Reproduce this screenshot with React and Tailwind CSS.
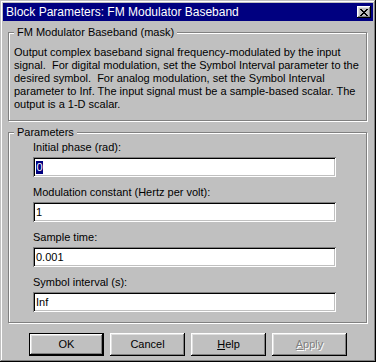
const description = [
  'Output complex baseband signal frequency-modulated by the input',
  'signal.  For digital modulation, set the Symbol Interval parameter to the',
  'desired symbol.  For analog modulation, set the Symbol Interval',
  'parameter to Inf. The input signal must be a sample-based scalar. The',
  'output is a 1-D scalar.',
]

const fields = [
  { label: 'Initial phase (rad):', value: '0', selected: true },
  { label: 'Modulation constant (Hertz per volt):', value: '1' },
  { label: 'Sample time:', value: '0.001' },
  { label: 'Symbol interval (s):', value: 'Inf' },
]

function CloseGlyph() {
  // 8x7 pixel cross, like the classic caption button
  const px = [
    [0, 0], [1, 0], [6, 0], [7, 0],
    [1, 1], [2, 1], [5, 1], [6, 1],
    [2, 2], [3, 2], [4, 2], [5, 2],
    [3, 3], [4, 3],
    [2, 4], [3, 4], [4, 4], [5, 4],
    [1, 5], [2, 5], [5, 5], [6, 5],
    [0, 6], [1, 6], [6, 6], [7, 6],
  ]
  return (
    <svg width="8" height="7" viewBox="0 0 8 7" shapeRendering="crispEdges">
      {px.map(([x, y]) => (
        <rect key={`${x}-${y}`} x={x} y={y} width="1" height="1" fill="#000" />
      ))}
    </svg>
  )
}

function Button({ children, isDefault, disabled }) {
  return (
    <button
      className={`w-[75px] h-[23px] flex items-center justify-center text-[11px] leading-[13px] bg-[#c0c0c0] shadow-[inset_-1px_-1px_#000,inset_1px_1px_#fff,inset_-2px_-2px_#808080,inset_2px_2px_#dfdfdf] ${
        isDefault ? 'border border-black' : ''
      } ${disabled ? 'text-[#808080] [text-shadow:1px_1px_0_#fff]' : 'text-black'}`}
    >
      {children}
    </button>
  )
}

export default function App() {
  return (
    <div className="w-[376px] h-[362px] bg-[#c0c0c0] p-[3px] flex flex-col shadow-[inset_-1px_-1px_#000,inset_1px_1px_#c0c0c0,inset_-2px_-2px_#808080,inset_2px_2px_#fff] font-['Liberation_Sans',Arial,sans-serif] text-black select-none">
      {/* Title bar */}
      <div className="h-[18px] bg-[#000080] flex items-center justify-between pl-[3px] pr-[2px]">
        <span className="text-white text-[12px] leading-[14px] whitespace-pre">
          Block Parameters: FM Modulator Baseband
        </span>
        <div className="w-[14px] h-[12px] bg-[#c0c0c0] flex items-center justify-center shadow-[inset_-1px_-1px_#000,inset_1px_1px_#fff,inset_-2px_-2px_#808080,inset_2px_2px_#dfdfdf]">
          <CloseGlyph />
        </div>
      </div>

      {/* Mask description */}
      <fieldset className="mt-[5px] ml-[5px] mr-[6px] border border-[#808080] shadow-[inset_1px_1px_#fff,1px_1px_#fff] pl-[5px] pt-[7px] pb-[9px]">
        <legend className="px-[3px] bg-[#c0c0c0] text-[11px] leading-[13px]">
          FM Modulator Baseband (mask)
        </legend>
        <div className="text-[11px] leading-[13px]">
          {description.map((line) => (
            <div key={line} className="whitespace-pre">
              {line}
            </div>
          ))}
        </div>
      </fieldset>

      {/* Parameters */}
      <fieldset className="mt-[5px] ml-[5px] mr-[6px] border border-[#808080] shadow-[inset_1px_1px_#fff,1px_1px_#fff] pl-[5px] pt-[2px] pb-[10px]">
        <legend className="px-[3px] bg-[#c0c0c0] text-[11px] leading-[13px]">Parameters</legend>
        <div className="ml-[19px] flex flex-col gap-[9px]">
          {fields.map((f) => (
            <div key={f.label} className="flex flex-col gap-[3px]">
              <span className="text-[11px] leading-[13px] whitespace-pre">{f.label}</span>
              <div className="w-[303px] h-[20px] bg-white flex items-center pl-[3px] text-[11px] leading-[13px] shadow-[inset_1px_1px_#808080,inset_-1px_-1px_#fff,inset_2px_2px_#000,inset_-2px_-2px_#c0c0c0]">
                {f.selected ? (
                  <span className="bg-[#000080] text-white px-[0.5px]">{f.value}</span>
                ) : (
                  <span>{f.value}</span>
                )}
              </div>
            </div>
          ))}
        </div>
      </fieldset>

      {/* Buttons */}
      <div className="mt-[10px] flex justify-center gap-[6px]">
        <Button isDefault>OK</Button>
        <Button>Cancel</Button>
        <Button>
          <span>
            <span className="underline">H</span>elp
          </span>
        </Button>
        <Button disabled>
          <span>
            <span className="underline">A</span>pply
          </span>
        </Button>
      </div>
    </div>
  )
}
